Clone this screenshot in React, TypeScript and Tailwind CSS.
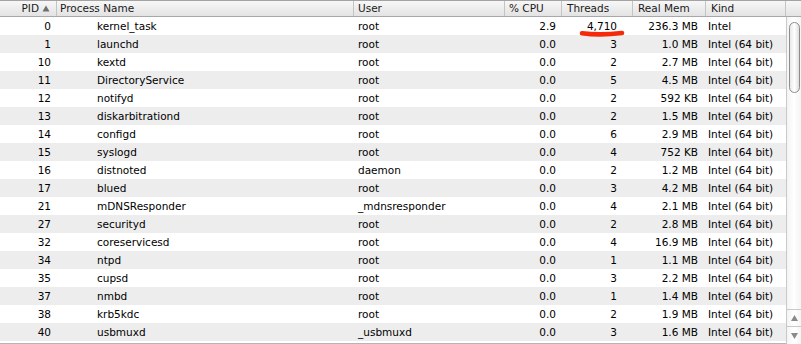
const FONT = "font-['Lucida_Grande','DejaVu_Sans',sans-serif]";

type Proc = [string, string, string, string, string, string, string];

const ROWS: Proc[] = [
  ["0", "kernel_task", "root", "2.9", "4,710", "236.3 MB", "Intel"],
  ["1", "launchd", "root", "0.0", "3", "1.0 MB", "Intel (64 bit)"],
  ["10", "kextd", "root", "0.0", "2", "2.7 MB", "Intel (64 bit)"],
  ["11", "DirectoryService", "root", "0.0", "5", "4.5 MB", "Intel (64 bit)"],
  ["12", "notifyd", "root", "0.0", "2", "592 KB", "Intel (64 bit)"],
  ["13", "diskarbitrationd", "root", "0.0", "2", "1.5 MB", "Intel (64 bit)"],
  ["14", "configd", "root", "0.0", "6", "2.9 MB", "Intel (64 bit)"],
  ["15", "syslogd", "root", "0.0", "4", "752 KB", "Intel (64 bit)"],
  ["16", "distnoted", "daemon", "0.0", "2", "1.2 MB", "Intel (64 bit)"],
  ["17", "blued", "root", "0.0", "3", "4.2 MB", "Intel (64 bit)"],
  ["21", "mDNSResponder", "_mdnsresponder", "0.0", "4", "2.1 MB", "Intel (64 bit)"],
  ["27", "securityd", "root", "0.0", "2", "2.8 MB", "Intel (64 bit)"],
  ["32", "coreservicesd", "root", "0.0", "4", "16.9 MB", "Intel (64 bit)"],
  ["34", "ntpd", "root", "0.0", "1", "1.1 MB", "Intel (64 bit)"],
  ["35", "cupsd", "root", "0.0", "3", "2.2 MB", "Intel (64 bit)"],
  ["37", "nmbd", "root", "0.0", "1", "1.4 MB", "Intel (64 bit)"],
  ["38", "krb5kdc", "root", "0.0", "2", "1.9 MB", "Intel (64 bit)"],
  ["40", "usbmuxd", "_usbmuxd", "0.0", "3", "1.6 MB", "Intel (64 bit)"],
];

// column widths: PID, Process Name, User, % CPU, Threads, Real Mem, Kind
const COLS = "grid-cols-[57px_297px_151px_57px_71px_73px_80px]";

function HeaderCell({ children, className = "" }: { children: React.ReactNode; className?: string }) {
  return (
    <div className={`flex h-full items-center border-r border-[#c4c4c4] ${className}`}>{children}</div>
  );
}

function Scroller() {
  return (
    <div className="flex w-[15px] flex-col">
      <div className="h-[17px] border-y border-t-[#a3a3a3] border-b-[#a8a8a8] bg-gradient-to-b from-[#f7f7f7] to-[#e3e3e3]" />
      <div className="relative flex flex-1 flex-col border-l border-[#c9c9c9] bg-gradient-to-r from-[#f4f4f4] via-white to-[#f4f4f4]">
        {/* thumb */}
        <div className="absolute left-[2px] top-[5px] h-[71px] w-[11px] rounded-[6px] border border-[#8d8d8d] bg-gradient-to-r from-[#e9e9e9] via-white to-[#dedede]" />
        <div className="mt-auto flex flex-col border-t border-[#c9c9c9]">
          <div className="flex h-[17px] items-center justify-center border-b border-[#c9c9c9]">
            <svg width="7" height="6" viewBox="0 0 7 6">
              <path d="M3.5 0L7 6H0z" fill="#8a8a8a" />
            </svg>
          </div>
          <div className="flex h-[17px] items-center justify-center">
            <svg width="7" height="6" viewBox="0 0 7 6">
              <path d="M0 0h7L3.5 6z" fill="#8a8a8a" />
            </svg>
          </div>
        </div>
      </div>
    </div>
  );
}

export default function App() {
  return (
    <div className={`relative flex h-[344px] w-[801px] overflow-hidden bg-white text-[10.5px] text-black ${FONT}`}>
      <div className="flex w-[786px] flex-col">
        {/* header */}
        <div
          className={`grid h-[17px] ${COLS} border-y border-t-[#a3a3a3] border-b-[#a8a8a8] bg-gradient-to-b from-[#f7f7f7] to-[#e3e3e3] leading-none text-[#1a1a1a]`}
        >
          <HeaderCell className="justify-end gap-[3px] pr-[6px]">
            <span>PID</span>
            <svg width="8" height="7" viewBox="0 0 8 7">
              <path d="M4 0.5L7.5 6.5H0.5z" fill="#6f6f6f" />
            </svg>
          </HeaderCell>
          <HeaderCell className="pl-[3px]">Process Name</HeaderCell>
          <HeaderCell className="pl-[4px]">User</HeaderCell>
          <HeaderCell className="pl-[4px]">% CPU</HeaderCell>
          <HeaderCell className="pl-[5px]">Threads</HeaderCell>
          <HeaderCell className="pl-[5px]">Real Mem</HeaderCell>
          <HeaderCell className="pl-[5px]">Kind</HeaderCell>
        </div>

        {/* rows */}
        <div className="flex flex-col">
          {ROWS.map((r, i) => (
            <div
              key={r[0]}
              className={`grid h-[18px] ${COLS} items-center leading-none ${i % 2 ? "bg-[#ededed]" : "bg-white"}`}
            >
              <div className="pr-[6px] text-right">{r[0]}</div>
              <div className="pl-[40px]">{r[1]}</div>
              <div className="pl-[4px]">{r[2]}</div>
              <div className="pr-[6px] text-right">{r[3]}</div>
              <div className="pr-[16px] text-right">{r[4]}</div>
              <div className="pr-[8px] text-right">{r[5]}</div>
              <div className="whitespace-nowrap pl-[2px]">{r[6]}</div>
            </div>
          ))}
        </div>
        <div className="mt-auto h-px bg-[#b5b5b5]" />
      </div>

      <Scroller />

      {/* red hand-drawn mark under the thread count */}
      <svg className="pointer-events-none absolute left-0 top-0" width="801" height="344">
        <path
          d="M582 33.2 Q600 35.6 622 33"
          fill="none"
          stroke="#f52a0a"
          strokeWidth="4.6"
          strokeLinecap="round"
        />
      </svg>
    </div>
  );
}
